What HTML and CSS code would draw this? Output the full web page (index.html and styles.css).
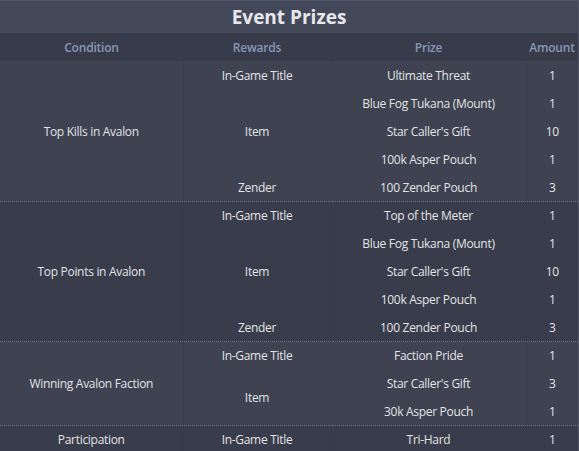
FILE: index.html
```html
<!DOCTYPE html>
<html lang="en">
<head>
    <meta charset="UTF-8">
    <title>Event Prizes</title>
    <link rel="stylesheet" href="styles.css">
</head>
<body>
    <table class="prizes">
        <colgroup>
            <col class="c-cond">
            <col class="c-rew">
            <col class="c-prize">
            <col class="c-amt">
        </colgroup>
        <thead>
            <tr><th colspan="4" class="title">Event Prizes</th></tr>
            <tr class="head">
                <th>Condition</th>
                <th>Rewards</th>
                <th>Prize</th>
                <th>Amount</th>
            </tr>
        </thead>
        <tbody class="odd first">
            <tr>
                <td rowspan="5">Top Kills in Avalon</td>
                <td>In-Game Title</td>
                <td>Ultimate Threat</td>
                <td>1</td>
            </tr>
            <tr>
                <td rowspan="3">Item</td>
                <td>Blue Fog Tukana (Mount)</td>
                <td>1</td>
            </tr>
            <tr><td>Star Caller's Gift</td><td>10</td></tr>
            <tr><td>100k Asper Pouch</td><td>1</td></tr>
            <tr><td>Zender</td><td>100 Zender Pouch</td><td>3</td></tr>
        </tbody>
        <tbody class="even">
            <tr>
                <td rowspan="5">Top Points in Avalon</td>
                <td>In-Game Title</td>
                <td>Top of the Meter</td>
                <td>1</td>
            </tr>
            <tr>
                <td rowspan="3">Item</td>
                <td>Blue Fog Tukana (Mount)</td>
                <td>1</td>
            </tr>
            <tr><td>Star Caller's Gift</td><td>10</td></tr>
            <tr><td>100k Asper Pouch</td><td>1</td></tr>
            <tr><td>Zender</td><td>100 Zender Pouch</td><td>3</td></tr>
        </tbody>
        <tbody class="odd">
            <tr>
                <td rowspan="3">Winning Avalon Faction</td>
                <td>In-Game Title</td>
                <td>Faction Pride</td>
                <td>1</td>
            </tr>
            <tr>
                <td rowspan="2">Item</td>
                <td>Star Caller's Gift</td>
                <td>3</td>
            </tr>
            <tr><td>30k Asper Pouch</td><td>1</td></tr>
        </tbody>
        <tbody class="even">
            <tr>
                <td>Participation</td>
                <td>In-Game Title</td>
                <td>Tri-Hard</td>
                <td>1</td>
            </tr>
        </tbody>
    </table>
</body>
</html>
```

FILE: styles.css
```css
body { margin: 0; background: #393d4b; font-family: "Open Sans", "Noto Sans", sans-serif; }
.prizes { width: 579px; table-layout: fixed; border-collapse: collapse; border-right: 2px solid #4d5263; border-top: 1px solid #50566a; }
.c-cond { width: 183px; }
.c-rew { width: 148px; }
.c-prize { width: 195px; }
.c-amt { width: 53px; }
.title { height: 32px; padding: 0; background: #444959; color: #e8e8ec; font-size: 19px; font-weight: 700; text-align: center; line-height: 32px; }
.head th { height: 28px; padding: 0; background: #383c4a; color: #8797b6; font-size: 12px; font-weight: 600; letter-spacing: -0.2px; text-align: center; }
td { height: 28px; padding: 0; color: #e2e3e6; font-size: 12px; letter-spacing: -0.3px; text-align: center; border-right: 1px solid #3b3f4d; }
.odd td { background: #3e4251; }
.even td { background: #393d4b; border-right-color: #373a48; }
tbody tr:first-child td { height: 27px; border-top: 1px dotted #6b7080; }
.first tr:first-child td { height: 28px; border-top: none; }
```
